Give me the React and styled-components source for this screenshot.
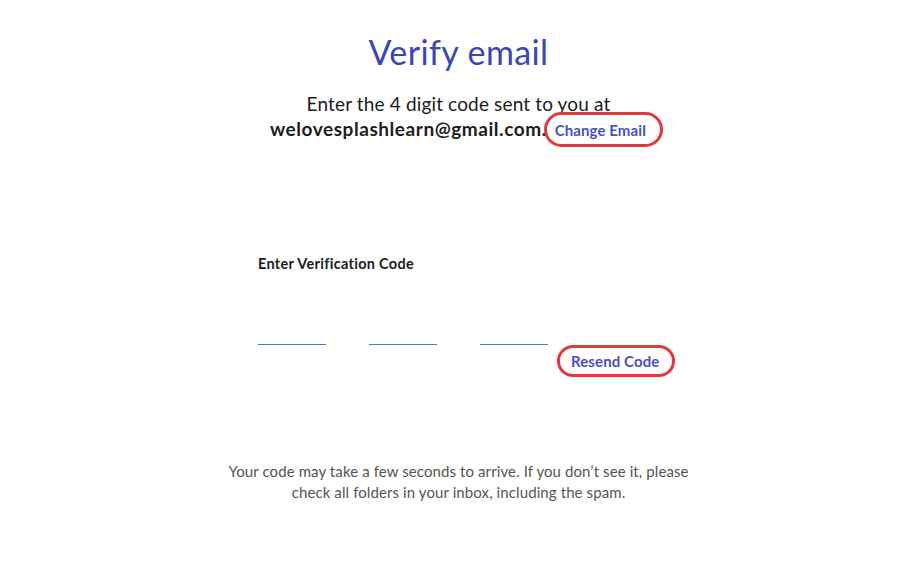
import styled, { createGlobalStyle } from "styled-components"

const Global = createGlobalStyle`
  body {
    margin: 0;
    background: #ffffff;
    font-family: "Lato", "Noto Sans", sans-serif;
  }
`

const Page = styled.div`
  width: 917px;
  height: 561px;
  display: flex;
  flex-direction: column;
  align-items: center;
  padding-top: 32px;
  box-sizing: border-box;
`

const Title = styled.h1`
  margin: 0;
  font-size: 34px;
  font-weight: 400;
  color: #3a46b3;
  line-height: 40px;
  letter-spacing: 0.4px;
`

const Sub = styled.div`
  margin-top: 20px;
  display: flex;
  flex-direction: column;
  align-items: center;
  color: #1c1c1c;
  font-size: 19px;
  line-height: 24px;
  letter-spacing: 0.15px;
`

const EmailLine = styled.div`
  height: 25px;
  display: flex;
  align-items: center;
  margin-left: 16px;
`

const Email = styled.span`
  font-weight: 700;
  font-size: 19px;
  letter-spacing: 0.55px;
`

const Pill = styled.a`
  box-sizing: border-box;
  display: inline-flex;
  align-items: center;
  height: 35px;
  padding: 0 14px 0 8px;
  margin-left: -3px;
  margin-top: 2px;
  border: 3px solid #e5373a;
  border-radius: 18px;
  color: #4a50c4;
  font-size: 15px;
  font-weight: 700;
  letter-spacing: 0.1px;
  text-decoration: none;
  cursor: pointer;
`

const Form = styled.div`
  width: 420px;
  margin-top: 114px;
  margin-left: 19px;
  display: flex;
  flex-direction: column;
`

const Label = styled.div`
  font-size: 14.5px;
  font-weight: 700;
  color: #1c1c1c;
  line-height: 18px;
  letter-spacing: 0.3px;
`

const CodeRow = styled.div`
  margin-top: 52px;
  display: flex;
  align-items: flex-start;
`

const Digit = styled.input`
  box-sizing: border-box;
  width: 68px;
  height: 20px;
  padding: 0;
  margin: 0 43px 0 0;
  border: none;
  border-bottom: 1px solid #3b7fd6;
  outline: none;
  font-size: 16px;
  text-align: center;
  &:nth-of-type(3) {
    margin-right: 9px;
  }
`

const Resend = styled(Pill)`
  margin: 20px 0 0;
  height: 32px;
  padding: 0 13px 0 11px;
`

const Note = styled.p`
  margin: 84px 0 0;
  width: 480px;
  text-align: center;
  font-size: 15px;
  line-height: 21px;
  letter-spacing: 0.1px;
  color: #555555;
`

export default function App() {
  return (
    <Page>
      <Global />
      <Title>Verify email</Title>
      <Sub>
        <div>Enter the 4 digit code sent to you at</div>
        <EmailLine>
          <Email>welovesplashlearn@gmail.com.</Email>
          <Pill>Change Email</Pill>
        </EmailLine>
      </Sub>
      <Form>
        <Label>Enter Verification Code</Label>
        <CodeRow>
          <Digit maxLength={1} />
          <Digit maxLength={1} />
          <Digit maxLength={1} />
          <Resend>Resend Code</Resend>
        </CodeRow>
      </Form>
      <Note>
        Your code may take a few seconds to arrive. If you don’t see it, please check all folders in your inbox, including the spam.
      </Note>
    </Page>
  )
}
